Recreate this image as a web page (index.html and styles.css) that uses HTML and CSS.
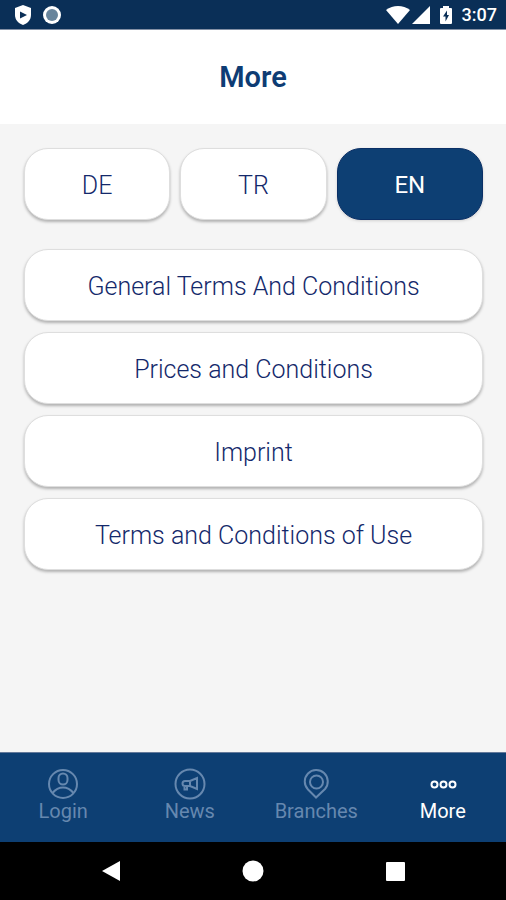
FILE: index.html
```
<!DOCTYPE html>
<html lang="en">
<head>
    <meta charset="UTF-8">
    <meta name="viewport" content="width=device-width, initial-scale=1.0">
    <title>More</title>
    <link rel="stylesheet" href="styles.css">
</head>
<body>
    <div class="status-bar">
        <div class="status-group">
            <svg class="icon-shield" width="18" height="20" viewBox="0 0 18 20">
                <path fill="#fff" d="M9 0 L17 3 V10 C17 15 13.500 18.500 9 20 C4.500 18.500 1 15 1 10 V3 Z"/>
                <path fill="#0a2f57" d="M6 6.500 L13 10 L6 13.500 Z"/>
            </svg>
            <svg width="18" height="18" viewBox="0 0 18 18">
                <circle cx="9" cy="9" r="9" fill="#fff"/>
                <circle cx="9" cy="9" r="6" fill="#68859c"/>
            </svg>
        </div>
        <div class="status-group status-right">
            <svg width="24" height="18" viewBox="0 0 24 18">
                <path fill="#fff" d="M0 4 C7 -1.300 17 -1.300 24 4 L12 18 Z"/>
            </svg>
            <svg width="18" height="18" viewBox="0 0 18 18">
                <path fill="#fff" d="M18 0 V18 H0 Z"/>
            </svg>
            <svg class="icon-battery" width="12" height="18" viewBox="0 0 12 18">
                <path fill="#fff" d="M3 0 H9 V2 H11 Q12 2 12 3 V17 Q12 18 11 18 H1 Q0 18 0 17 V3 Q0 2 1 2 H3 Z"/>
                <path fill="#0a2f57" d="M7 4.500 L3 10.500 H5.500 V15.500 L9 9 H7 Z"/>
            </svg>
            <span class="clock">3:07</span>
        </div>
    </div>

    <header class="header">
        <h1>More</h1>
    </header>

    <main class="content">
        <div class="languages">
            <button class="card-button">DE</button>
            <button class="card-button">TR</button>
            <button class="card-button active">EN</button>
        </div>
        <div class="menu">
            <button class="card-button">General Terms And Conditions</button>
            <button class="card-button">Prices and Conditions</button>
            <button class="card-button">Imprint</button>
            <button class="card-button">Terms and Conditions of Use</button>
        </div>
    </main>

    <nav class="tab-bar">
        <a class="tab" href="#login">
            <svg width="32" height="32" viewBox="0 0 32 32">
                <circle cx="16" cy="16" r="14"/>
                <rect x="11.500" y="5.500" width="9" height="11" rx="4.500"/>
                <path d="M5.500 25 Q10 19.500 16 19.500 T26.500 25"/>
            </svg>
            <span>Login</span>
        </a>
        <a class="tab" href="#news">
            <svg width="32" height="32" viewBox="0 0 32 32">
                <circle cx="16" cy="16" r="14.500"/>
                <path d="M16 13 L23 10 V21 L16 18 M16 13 V18 M16 13 H11 A2.500 2.500 0 0 0 11 18 H16 M10.500 18 V21.500 H13 V18"/>
            </svg>
            <span>News</span>
        </a>
        <a class="tab" href="#branches">
            <svg width="32" height="32" viewBox="0 0 32 32">
                <path d="M16 29.500 L8 21.500 A11.500 11.500 0 1 1 25 21 Z"/>
                <circle cx="16.500" cy="14" r="6.500"/>
            </svg>
            <span>Branches</span>
        </a>
        <a class="tab active" href="#more">
            <svg width="32" height="32" viewBox="0 0 32 32">
                <circle cx="7.500" cy="16.500" r="3"/>
                <circle cx="16.500" cy="16.500" r="3"/>
                <circle cx="25.500" cy="16.500" r="3"/>
            </svg>
            <span>More</span>
        </a>
    </nav>

    <div class="system-nav">
        <button aria-label="Back">
            <svg width="22" height="22" viewBox="0 0 22 22"><path d="M2 11 L20 1 V21 Z"/></svg>
        </button>
        <button aria-label="Home">
            <svg width="22" height="22" viewBox="0 0 22 22"><circle cx="11" cy="11" r="10.500"/></svg>
        </button>
        <button aria-label="Recent apps">
            <svg width="22" height="22" viewBox="0 0 22 22"><rect x="2" y="2" width="19" height="19" rx="1"/></svg>
        </button>
    </div>
</body>
</html>
```
FILE: styles.css
```
* {
    box-sizing: border-box;
}
body {
    display: flex;
    flex-direction: column;
    min-height: 100vh;
    margin: 0;
    font-family: Roboto, "Liberation Sans", sans-serif;
    background-color: #f5f5f5;
}
button {
    font-family: inherit;
    border: none;
    cursor: pointer;
}
.status-bar {
    display: flex;
    justify-content: space-between;
    align-items: center;
    height: 30px;
    padding: 1px 9px 0 14px;
    background-color: #0a2f57;
    border-bottom: 1px solid #8390a5;
}
.status-group {
    display: flex;
    align-items: center;
    gap: 11px;
}
.status-right {
    gap: 2px;
}
.icon-battery {
    margin: 0 8px;
}
.clock {
    color: white;
    font-size: 18px;
    font-weight: 500;
    line-height: 24px;
}
.header {
    padding: 31px 0;
    background-color: white;
}
.header h1 {
    margin: 0;
    text-align: center;
    color: #0e3c74;
    font-size: 29px;
    font-weight: 600;
    line-height: 32px;
}
.content {
    flex: 1;
    padding: 24px 23px 24px 24px;
}
.languages {
    display: grid;
    grid-template-columns: repeat(3, 1fr);
    gap: 10px;
    margin-bottom: 29px;
}
.menu {
    display: flex;
    flex-direction: column;
    gap: 11px;
}
.card-button {
    height: 72px;
    padding: 2px 16px 0;
    color: #14296b;
    font-size: 25px;
    font-weight: 300;
    background-color: white;
    border: 1px solid #dedede;
    border-radius: 24px;
    box-shadow: 0 2px 3px rgba(0, 0, 0, 0.28);
}
.card-button.active {
    color: white;
    font-weight: 400;
    font-size: 24px;
    background-color: #0d3f73;
    border-color: #0a2f66;
    box-shadow: 0 1px 3px rgba(0, 0, 0, 0.15);
}
.tab-bar {
    display: grid;
    grid-template-columns: repeat(4, 1fr);
    height: 90px;
    padding-top: 15px;
    background-color: #0d3f73;
    border-top: 1px solid #63799a;
}
.tab {
    display: flex;
    flex-direction: column;
    align-items: center;
    color: #6688af;
    font-size: 20px;
    line-height: 22px;
    text-decoration: none;
}
.tab svg {
    fill: none;
    stroke: currentColor;
    stroke-width: 2;
}
.tab.active {
    color: white;
}
.system-nav {
    display: flex;
    justify-content: center;
    gap: 120px;
    height: 58px;
    background-color: black;
}
.system-nav button {
    display: flex;
    align-items: center;
    padding: 0;
    background: none;
}
.system-nav svg {
    fill: white;
}
```
